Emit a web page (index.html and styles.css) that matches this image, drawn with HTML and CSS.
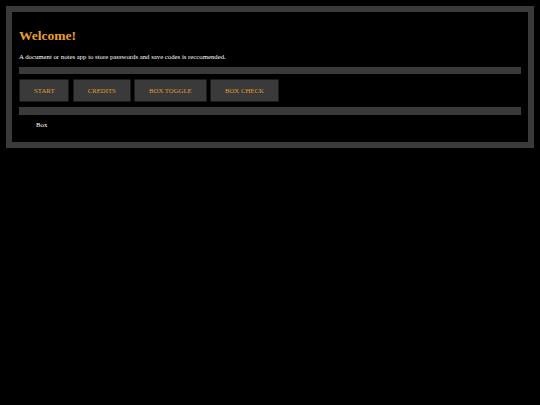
FILE: index.html
```html
<!DOCTYPE html>
<html>
<head>
<meta charset="utf-8">
<title>Welcome</title>
<link rel="stylesheet" href="styles.css">
</head>
<body>
<div class="frame">
  <h1 class="title">Welcome!</h1>
  <p class="intro">A document or notes app to store passwords and save codes is reccomended.</p>
  <div class="bar"></div>
  <div class="buttons">
    <button class="btn">START</button>
    <button class="btn">CREDITS</button>
    <button class="btn">BOX TOGGLE</button>
    <button class="btn">BOX CHECK</button>
  </div>
  <div class="bar"></div>
  <p class="box">Box</p>
</div>
</body>
</html>
```

FILE: styles.css
```css
html, body {
  background: #000;
}
body {
  margin: 6px;
  font-family: "Liberation Serif", "Times New Roman", serif;
  font-size: 6.75px;
  color: #fff;
}
.frame {
  border: 6px solid #3a3a3a;
  padding: 6.75px 6.75px 6.75px 7px;
}
.title {
  margin: 9.05px 0;
  font-size: 13.5px;
  font-weight: bold;
  color: #eda02c;
}
.intro {
  margin: 6.75px 0;
}
.bar {
  height: 7.2px;
  background: #3a3a3a;
}
.buttons {
  display: flex;
  gap: 3.6px;
  padding: 5px 0 5.4px 0.3px;
}
.btn {
  margin: 0;
  padding: 6.75px 13.8px;
  background: #3a3a3a;
  border: 1px solid #1c1c1c;
  border-radius: 1px;
  color: #e09a30;
  font-family: "Liberation Serif", "Times New Roman", serif;
  font-size: 6.75px;
  line-height: 7.75px;
}
.box {
  margin: 6.75px 0;
  padding-left: 17px;
  color: #fff;
}
```
